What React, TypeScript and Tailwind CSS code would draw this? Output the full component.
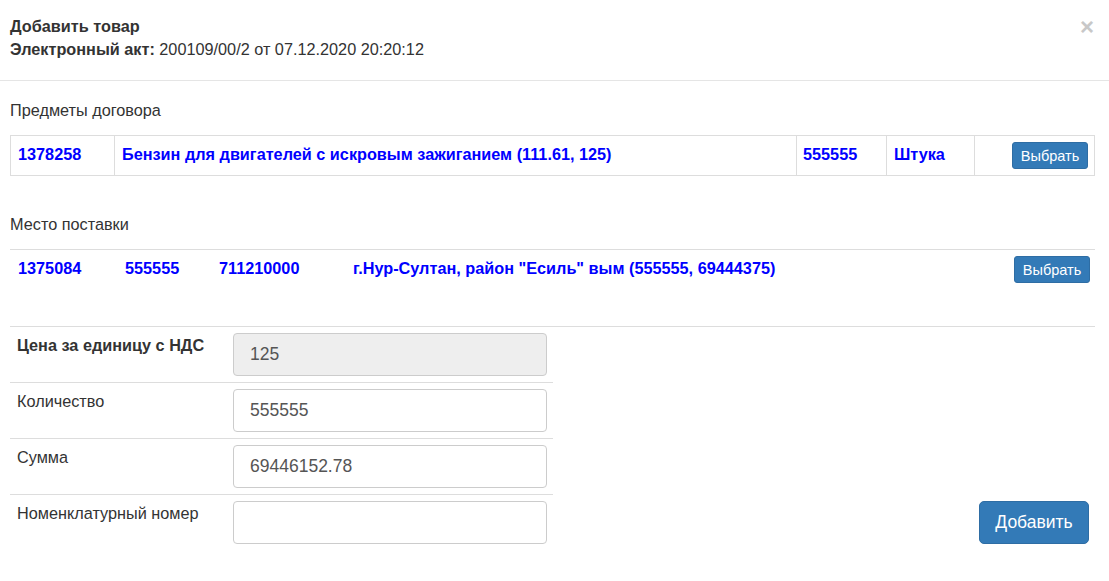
import React from 'react'

const blue = 'text-[#0000ff] font-bold'

function SelectButton() {
  return (
    <button
      type="button"
      className="h-[27px] w-[76px] rounded-[3px] border border-[#2e6da4] bg-[#337ab7] text-[14.5px] leading-[20px] text-white"
    >
      Выбрать
    </button>
  )
}

function FormRow({
  label,
  value,
  bold,
  disabled,
  last,
}: {
  label: string
  value: string
  bold?: boolean
  disabled?: boolean
  last?: boolean
}) {
  return (
    <div className={`flex w-[543px] ${last ? '' : 'border-b border-[#ddd]'}`}>
      <div className={`w-[217px] pl-[7px] pt-[7px] leading-[23px] ${bold ? 'font-bold' : ''}`}>{label}</div>
      <div className="py-[6px] pl-[6px]">
        <input
          readOnly
          disabled={disabled}
          value={value}
          className={`h-[43px] w-[314px] rounded-[4px] border border-[#ccc] px-[16px] text-[17.5px] text-[#555] outline-none ${
            disabled ? 'bg-[#eee]' : 'bg-white'
          }`}
        />
      </div>
    </div>
  )
}

export default function App() {
  return (
    <div className="w-[1109px] h-[581px] bg-white text-[16.25px] leading-[23px] text-[#333] font-['Liberation_Sans',Arial,sans-serif]">
      {/* Header */}
      <div className="flex h-[81px] justify-between border-b border-[#e5e5e5] pl-[10px] pr-[15px] pt-[15px]">
        <div>
          <div className="font-bold">Добавить товар</div>
          <div>
            <span className="font-bold">Электронный акт:</span> 200109/00/2 от 07.12.2020 20:20:12
          </div>
        </div>
        <span className="text-[24px] font-bold leading-[24px] text-[#c8c8c8]">×</span>
      </div>

      <div className="px-[10px]">
        {/* Contract items */}
        <div className="pt-[18px]">Предметы договора</div>
        <div className="mt-[13px] flex h-[41px] w-[1085px] border border-[#ddd]">
          <div className={`w-[103px] px-[7px] pt-[7px] ${blue}`}>1378258</div>
          <div className={`w-[682px] border-l border-[#ddd] px-[7px] pt-[7px] ${blue}`}>
            Бензин для двигателей с искровым зажиганием (111.61, 125)
          </div>
          <div className={`w-[90px] border-l border-[#ddd] px-[6px] pt-[7px] ${blue}`}>555555</div>
          <div className={`w-[88px] border-l border-[#ddd] px-[7px] pt-[7px] ${blue}`}>Штука</div>
          <div className="flex flex-1 justify-end border-l border-[#ddd] pr-[6px] pt-[6px]">
            <SelectButton />
          </div>
        </div>

        {/* Delivery place */}
        <div className="pt-[37px]">Место поставки</div>
        <div className="mt-[13px] flex h-[78px] w-[1085px] border-y border-[#ddd]">
          <div className={`w-[115px] pl-[8px] pt-[7px] ${blue}`}>1375084</div>
          <div className={`w-[94px] pt-[7px] ${blue}`}>555555</div>
          <div className={`w-[134px] pt-[7px] ${blue}`}>711210000</div>
          <div className={`flex-1 pt-[7px] ${blue}`}>г.Нур-Султан, район "Есиль" вым (555555, 69444375)</div>
          <div className="pr-[5px] pt-[6px]">
            <SelectButton />
          </div>
        </div>

        {/* Form */}
        <div className="flex items-end justify-between">
          <div>
            <FormRow label="Цена за единицу с НДС" value="125" bold disabled />
            <FormRow label="Количество" value="555555" />
            <FormRow label="Сумма" value="69446152.78" />
            <FormRow label="Номенклатурный номер" value="" last />
          </div>
          <button
            type="button"
            className="mb-[6px] mr-[10px] h-[43px] w-[110px] rounded-[5px] border border-[#2e6da4] bg-[#337ab7] text-[17.5px] text-white"
          >
            Добавить
          </button>
        </div>
      </div>
    </div>
  )
}
